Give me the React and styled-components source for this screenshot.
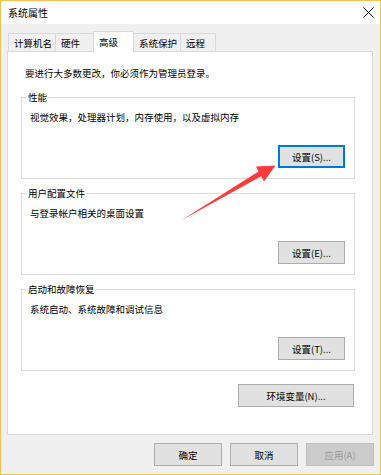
import React from "react";
import styled, { createGlobalStyle } from "styled-components";

const GlobalStyle = createGlobalStyle`
  html, body {
    margin: 0;
    padding: 0;
    background: #ffffff;
  }
  * {
    box-sizing: border-box;
  }
`;

const FONT = `"Noto Sans CJK SC", "Noto Sans", "Liberation Sans", sans-serif`;

const Window = styled.div`
  position: relative;
  width: 381px;
  height: 475px;
  display: flex;
  flex-direction: column;
  border: 1px solid #f0c34a;
  font-family: ${FONT};
  font-size: 9.5px;
  color: #000;
  background: #f0f0f0;
  overflow: hidden;
`;

const TitleBar = styled.div`
  height: 23px;
  flex: none;
  display: flex;
  align-items: center;
  justify-content: space-between;
  padding: 0 6px 0 7px;
  background: #ffffff;
  font-size: 10px;
`;

const Close = styled.svg`
  width: 11px;
  height: 11px;
  display: block;
`;

const Body = styled.div`
  flex: 1;
  display: flex;
  flex-direction: column;
  padding: 7px 7px 0 6px;
`;

const TabRow = styled.div`
  display: flex;
  align-items: flex-end;
  padding-left: 1px;
  margin-bottom: -1px;
  position: relative;
  z-index: 1;
`;

const Tab = styled.div`
  width: ${(p) => p.$w}px;
  height: ${(p) => (p.$active ? "21px" : "19px")};
  display: flex;
  align-items: ${(p) => (p.$active ? "flex-start" : "center")};
  padding: ${(p) => (p.$active ? "3px 0 0 5px" : "0 0 0 5px")};
  margin-left: -1px;
  border: 1px solid #d9d9d9;
  border-bottom: ${(p) => (p.$active ? "none" : "1px solid #d9d9d9")};
  background: ${(p) => (p.$active ? "#ffffff" : "#f0f0f0")};
  ${(p) => (p.$active ? "position: relative; z-index: 2;" : "")}
  white-space: nowrap;
  &:first-child {
    margin-left: 0;
  }
`;

const Panel = styled.div`
  height: 384px;
  flex: none;
  background: #ffffff;
  border: 1px solid #d9d9d9;
  padding: 13px 17px 0 13px;
  display: flex;
  flex-direction: column;
`;

const Notice = styled.div`
  line-height: 16px;
  padding-left: 4px;
  margin-bottom: 8px;
`;

const Group = styled.fieldset`
  margin: 0 0 6px 0;
  padding: 4px 9px 10px 5px;
  border: 1px solid #dcdcdc;
  min-width: 0;
`;

const Legend = styled.legend`
  padding: 0 1px;
  line-height: 16px;
  font-size: 9.5px;
`;

const Desc = styled.div`
  line-height: 16px;
  padding-left: 3px;
`;

const ButtonRow = styled.div`
  display: flex;
  justify-content: flex-end;
  gap: 8px;
  margin-top: ${(p) => p.$top || 0}px;
  padding-right: ${(p) => p.$right || 0}px;
`;

const Button = styled.button`
  width: ${(p) => p.$w || 67}px;
  height: 23px;
  padding: 0;
  margin: 0;
  font-family: ${FONT};
  font-size: 9.5px;
  color: ${(p) => (p.disabled ? "#9a9a9a" : "#000")};
  background: ${(p) => (p.disabled ? "#cccccc" : "#e1e1e1")};
  border: 1px solid
    ${(p) => (p.$focus ? "#0078d7" : p.disabled ? "#bfbfbf" : "#adadad")};
  box-shadow: ${(p) => (p.$focus ? "inset 0 0 0 1px #0078d7" : "none")};
  border-radius: 0;
  cursor: default;
`;

const Footer = styled.div`
  display: flex;
  justify-content: flex-end;
  gap: 8px;
  padding: 8px 0 0 0;
  margin-right: -1px;
`;

const Arrow = styled.svg`
  position: absolute;
  left: 0;
  top: 0;
  width: 381px;
  height: 475px;
  pointer-events: none;
`;

const tabs = [
  { label: "计算机名", w: 48 },
  { label: "硬件", w: 39 },
  { label: "高级", w: 41, active: true },
  { label: "系统保护", w: 48 },
  { label: "远程", w: 36 },
];

const groups = [
  {
    title: "性能",
    desc: "视觉效果，处理器计划，内存使用，以及虚拟内存",
    button: "设置(S)...",
    focus: true,
  },
  {
    title: "用户配置文件",
    desc: "与登录帐户相关的桌面设置",
    button: "设置(E)...",
  },
  {
    title: "启动和故障恢复",
    desc: "系统启动、系统故障和调试信息",
    button: "设置(T)...",
  },
];

export default function App() {
  return (
    <>
      <GlobalStyle />
      <Window>
        <TitleBar>
          <span>系统属性</span>
          <Close viewBox="0 0 11 11">
            <path d="M0.5 0.5 L10.5 10.5 M10.5 0.5 L0.5 10.5" stroke="#000" strokeWidth="1" />
          </Close>
        </TitleBar>
        <Body>
          <TabRow>
            {tabs.map((t) => (
              <Tab key={t.label} $w={t.w} $active={t.active}>
                {t.label}
              </Tab>
            ))}
          </TabRow>
          <Panel>
            <Notice>要进行大多数更改，你必须作为管理员登录。</Notice>
            {groups.map((g) => (
              <Group key={g.title}>
                <Legend>{g.title}</Legend>
                <Desc>{g.desc}</Desc>
                <ButtonRow $top={20}>
                  <Button $focus={g.focus}>{g.button}</Button>
                </ButtonRow>
              </Group>
            ))}
            <ButtonRow $top={7} $right={1}>
              <Button $w={116}>环境变量(N)...</Button>
            </ButtonRow>
          </Panel>
          <Footer>
            <Button $w={68}>确定</Button>
            <Button $w={68}>取消</Button>
            <Button $w={68} disabled>
              应用(A)
            </Button>
          </Footer>
        </Body>
        <Arrow viewBox="0 0 381 475">
          <polygon
            points="180,219.5 257.5,170.5 255,165.5 274.5,164.5 263,180.5 260.2,175.2"
            fill="#ff3b3b"
          />
        </Arrow>
      </Window>
    </>
  );
}
